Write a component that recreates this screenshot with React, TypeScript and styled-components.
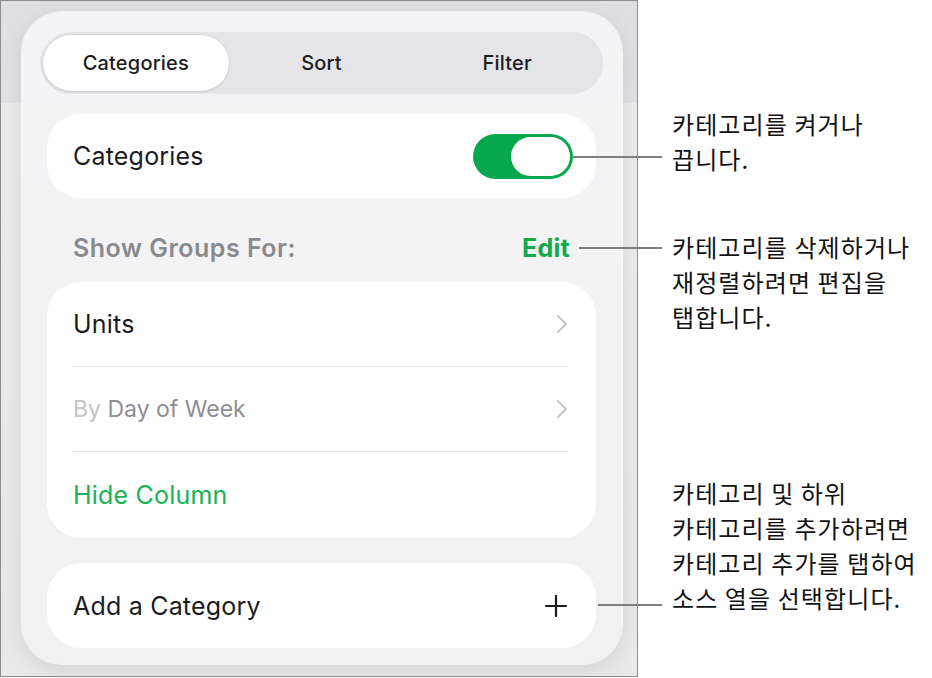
import { createGlobalStyle, styled } from "styled-components";

const GlobalStyle = createGlobalStyle`
  html, body {
    margin: 0;
    padding: 0;
    background: #ffffff;
  }
  body {
    font-family: Inter, "Noto Sans", "Liberation Sans", sans-serif;
    -webkit-font-smoothing: antialiased;
  }
`;

function Chevron() {
	return (
		<svg width="12" height="20" viewBox="0 0 12 20" fill="none">
			<path d="M2 2l8 8-8 8" stroke="#c5c5c8" strokeWidth="2" strokeLinecap="round" strokeLinejoin="round" />
		</svg>
	);
}

function PlusIcon() {
	return (
		<svg width="22" height="22" viewBox="0 0 22 22" fill="none">
			<path d="M11 1v20M1 11h20" stroke="#1c1c1e" strokeWidth="2.2" strokeLinecap="round" />
		</svg>
	);
}

const segments = ["Categories", "Sort", "Filter"];

export default function App() {
	return (
		<>
			<GlobalStyle />
			<Page>
				<Frame>
					<Panel>
						<Segmented>
							{segments.map((s, i) => (
								<Segment key={s} $active={i === 0}>
									{s}
								</Segment>
							))}
						</Segmented>

						<Card>
							<RowLabel>Categories</RowLabel>
							<Toggle>
								<Knob />
							</Toggle>
						</Card>

						<SectionHeader>
							<HeaderLabel>Show Groups For:</HeaderLabel>
							<EditLink>Edit</EditLink>
						</SectionHeader>

						<ListCard>
							<ListRow>
								<RowLabel>Units</RowLabel>
								<Chevron />
							</ListRow>
							<ListRow>
								<RowLabel $muted>
									<Faint>By</Faint> Day of Week
								</RowLabel>
								<Chevron />
							</ListRow>
							<ListRow $last>
								<RowLabel $green>Hide Column</RowLabel>
							</ListRow>
						</ListCard>

						<AddCard>
							<RowLabel>Add a Category</RowLabel>
							<PlusIcon />
						</AddCard>
					</Panel>
				</Frame>

				<Callouts>
					<Callout $top={106}>
						카테고리를 켜거나
						<br />
						끕니다.
					</Callout>
					<Callout $top={53}>
						카테고리를 삭제하거나
						<br />
						재정렬하려면 편집을
						<br />
						탭합니다.
					</Callout>
					<Callout $top={141}>
						카테고리 및 하위
						<br />
						카테고리를 추가하려면
						<br />
						카테고리 추가를 탭하여
						<br />
						소스 열을 선택합니다.
					</Callout>
				</Callouts>

				<Leader style={{ left: 573, top: 156, width: 89 }} />
				<Leader style={{ left: 579, top: 247, width: 83 }} />
				<Leader style={{ left: 598, top: 604, width: 64 }} />
			</Page>
		</>
	);
}

//#region Styled Components
const Page = styled.div`
  position: relative;
  display: flex;
  flex-direction: row;
  align-items: flex-start;
  width: 932px;
  height: 678px;
`;

const Frame = styled.div`
  box-sizing: border-box;
  width: 638px;
  height: 677px;
  flex-shrink: 0;
  border: 1px solid #8d8d8d;
  background: linear-gradient(#dedee3 0, #e2e2e6 102px, #ececec 102px, #e9e9e9 100%);
  padding: 11px 0 0 21px;
  overflow: hidden;
`;

const Panel = styled.div`
  box-sizing: border-box;
  width: 600px;
  height: 652px;
  border-radius: 40px;
  background: linear-gradient(#f4f4f6, #f1f1f2);
  box-shadow: 0 0 0 1px rgba(255, 255, 255, 0.7), 0 6px 24px rgba(0, 0, 0, 0.1);
  padding: 20px 19px 16px 18px;
  display: flex;
  flex-direction: column;
`;

const Segmented = styled.div`
  display: grid;
  grid-template-columns: repeat(3, 1fr);
  height: 62px;
  box-sizing: border-box;
  padding: 3px;
  border-radius: 31px;
  background: #e4e4e9;
  margin-bottom: 20px;
`;

const Segment = styled.div<{ $active?: boolean }>`
  display: flex;
  align-items: center;
  justify-content: center;
  border-radius: 29px;
  font-size: 20px;
  font-weight: 500;
  color: #1c1c1e;
  letter-spacing: 0.2px;
  background: ${({ $active }) => ($active ? "#ffffff" : "transparent")};
  box-shadow: ${({ $active }) => ($active ? "0 1px 3px rgba(0,0,0,0.1), 0 0 0 1px rgba(0,0,0,0.04)" : "none")};
`;

const Card = styled.div`
  display: flex;
  align-items: center;
  justify-content: space-between;
  height: 84px;
  box-sizing: border-box;
  margin: 0 7px;
  padding: 0 23px 0 26px;
  background: #ffffff;
  border-radius: 34px;
`;

const AddCard = styled(Card)`
  height: 85px;
  margin-top: 25px;
  padding: 0 29px 0 26px;
`;

const RowLabel = styled.span<{ $muted?: boolean; $green?: boolean }>`
  font-size: ${({ $muted }) => ($muted ? "23px" : "25px")};
  font-weight: 400;
  letter-spacing: ${({ $muted }) => ($muted ? "0" : "0.2px")};
  color: ${({ $muted, $green }) => ($green ? "#19b257" : $muted ? "#8e8e93" : "#1c1c1e")};
`;

const Faint = styled.span`
  color: #c4c4c7;
`;

const Toggle = styled.div`
  box-sizing: border-box;
  width: 100px;
  height: 45px;
  border-radius: 23px;
  background: #06a74f;
  padding: 3px;
  display: flex;
  justify-content: flex-end;
`;

const Knob = styled.div`
  width: 59px;
  height: 39px;
  border-radius: 20px;
  background: #ffffff;
`;

const SectionHeader = styled.div`
  display: flex;
  align-items: center;
  justify-content: space-between;
  height: 84px;
  box-sizing: border-box;
  padding: 16px 33px 0 33px;
`;

const HeaderLabel = styled.span`
  font-size: 25px;
  font-weight: 600;
  color: #8a8a8e;
  letter-spacing: 0.5px;
`;

const EditLink = styled.span`
  font-size: 25px;
  font-weight: 700;
  color: #0fa94c;
  letter-spacing: 0.3px;
`;

const ListCard = styled.div`
  display: flex;
  flex-direction: column;
  margin: 0 7px;
  background: #ffffff;
  border-radius: 34px;
  padding: 0 28px 0 26px;
`;

const ListRow = styled.div<{ $last?: boolean }>`
  display: flex;
  align-items: center;
  justify-content: space-between;
  height: ${({ $last }) => ($last ? "86px" : "85px")};
  box-sizing: border-box;
  border-bottom: ${({ $last }) => ($last ? "none" : "1.5px solid #e3e3e5")};
`;

const Callouts = styled.div`
  display: flex;
  flex-direction: column;
  padding-left: 34px;
`;

const Callout = styled.div<{ $top: number }>`
  margin-top: ${({ $top }) => $top}px;
  font-family: "Noto Sans CJK KR", "Noto Sans", sans-serif;
  font-size: 24px;
  line-height: 35px;
  color: #111111;
  white-space: nowrap;
  letter-spacing: 1.1px;
`;

const Leader = styled.div`
  position: absolute;
  height: 2px;
  background: #7e7e7e;
`;
//#endregion
